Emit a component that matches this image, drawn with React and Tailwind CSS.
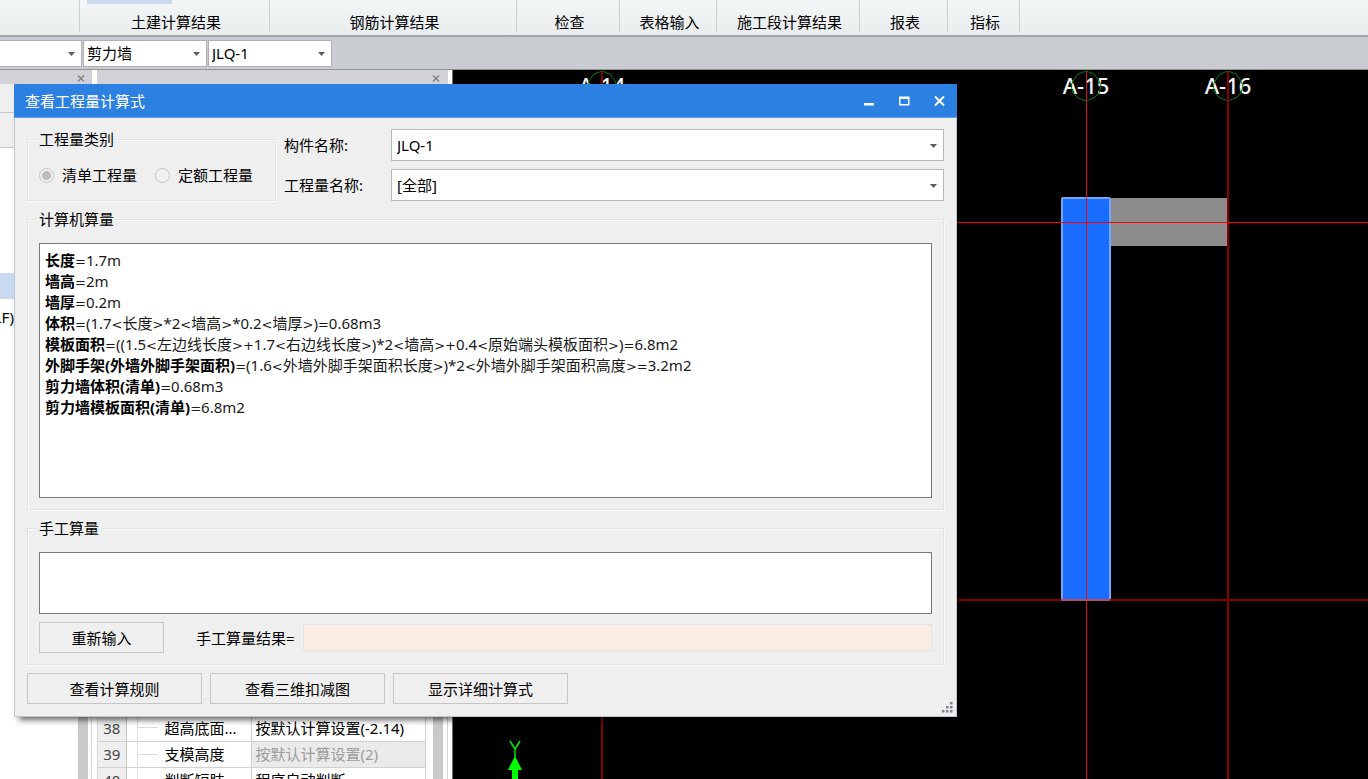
import React from "react";

const ribbonGroups = [
  { label: "", width: "w-[80px]" },
  { label: "土建计算结果", width: "w-[190px]", active: true },
  { label: "钢筋计算结果", width: "w-[247px]" },
  { label: "检查", width: "w-[103px]" },
  { label: "表格输入", width: "w-[97px]" },
  { label: "施工段计算结果", width: "w-[143px]" },
  { label: "报表", width: "w-[88px]" },
  { label: "指标", width: "w-[72px]" },
];

const formulas = [
  ["长度", "=1.7m"],
  ["墙高", "=2m"],
  ["墙厚", "=0.2m"],
  ["体积", "=(1.7<长度>*2<墙高>*0.2<墙厚>)=0.68m3"],
  ["模板面积", "=((1.5<左边线长度>+1.7<右边线长度>)*2<墙高>+0.4<原始端头模板面积>)=6.8m2"],
  ["外脚手架(外墙外脚手架面积)", "=(1.6<外墙外脚手架面积长度>)*2<外墙外脚手架面积高度>=3.2m2"],
  ["剪力墙体积(清单)", "=0.68m3"],
  ["剪力墙模板面积(清单)", "=6.8m2"],
];

const properties = [
  { id: 38, name: "超高底面...", value: "按默认计算设置(-2.14)" },
  { id: 39, name: "支模高度", value: "按默认计算设置(2)", muted: true },
  { id: 40, name: "判断短肢...", value: "程序自动判断" },
];

function Arrow() {
  return (
    <svg className="pointer-events-none absolute right-[7px] top-1/2 -mt-[1px]" width="7" height="4" viewBox="0 0 7 4" aria-hidden="true">
      <path d="M0 0h7L3.5 4z" fill="#5c5c5c" />
    </svg>
  );
}

function Combo({ id, label, value, className, selectClass }) {
  return (
    <div className={"relative " + className}>
      <select
        id={id}
        aria-label={label}
        defaultValue={value}
        className={"block h-full w-full appearance-none rounded-none bg-white pr-5 text-black outline-none " + selectClass}
      >
        <option value={value}>{value}</option>
      </select>
      <Arrow />
    </div>
  );
}

function CloseMark() {
  return (
    <svg width="8" height="7" viewBox="0 0 8 7" aria-hidden="true">
      <path d="M1 0.5l6 6M7 0.5l-6 6" stroke="#858585" strokeWidth="1.5" fill="none" />
    </svg>
  );
}

function Group({ title, className, children }) {
  return (
    <fieldset className={"min-w-0 border border-[#e2e2e2] shadow-[1px_1px_0_#fafafa,inset_1px_1px_0_#fafafa] " + className}>
      <legend className="-ml-[3px] h-5 bg-[#efefef] px-[3px] leading-5">{title}</legend>
      {children}
    </fieldset>
  );
}

function PushButton({ className, children }) {
  return (
    <button type="button" className={"h-[31px] border border-[#c6c6c6] bg-[#efefef] leading-5 " + className}>
      {children}
    </button>
  );
}

function Radio({ label, checked }) {
  return (
    <label className="flex items-center gap-2">
      <input
        type="radio"
        name="kind"
        disabled
        defaultChecked={checked}
        className="size-[15px] shrink-0 appearance-none rounded-full border border-[#c4c4c4] bg-[#f1f1f1] checked:bg-[radial-gradient(circle,#bcbcbc_4px,#f1f1f1_5px)]"
      />
      {label}
    </label>
  );
}

function Expression({ text }) {
  return text.split(/([<>=+])/).map((part, i) =>
    i % 2 ? (
      <span key={i} className="font-['DejaVu_Sans',sans-serif] text-[13px] leading-none">{part}</span>
    ) : (
      part
    )
  );
}

function AxisLabel({ x, text }) {
  return (
    <g>
      <text x={x} y="24" textAnchor="middle" fill="#f4f4f4" fontSize="22" fontWeight="500" fontFamily="'Noto Sans', sans-serif">
        {text}
      </text>
      <path
        transform={`translate(${x} 16)`}
        d="M0-15L8-12L13-5L15 0L13 7L8 12L0 15L-8 12L-13 7L-15 0L-13-5L-8-12Z"
        fill="none"
        stroke="#007c00"
      />
    </g>
  );
}

function Drawing() {
  return (
    <svg className="block h-full w-full bg-black" aria-label="平面图">
      <rect x="658" y="128" width="117" height="48" fill="#8c8c8c" />
      <rect x="609" y="128" width="48" height="402" rx="1" fill="#186dff" stroke="#76a5f5" strokeWidth="2" />
      <AxisLabel x={149} text="A-14" />
      <AxisLabel x={633} text="A-15" />
      <AxisLabel x={775} text="A-16" />
      <g shapeRendering="crispEdges">
        <path d="M149 1V2000M775 1V2000" stroke="#8a0000" strokeWidth="2" />
        <rect x="633" y="1" width="1" height="2000" fill="#d4141c" />
        <path d="M0 530H4000" stroke="#8a0000" strokeWidth="2" />
        <path d="M0 152.5H4000" stroke="#f00" strokeWidth="1" />
      </g>
      <path d="M608 530h49" stroke="#b74a6b" strokeWidth="2" />
      <path d="M57 671l5 8l5-8M62 679v8" stroke="#00e800" strokeWidth="1.5" fill="none" />
      <path d="M62 686l7 14h-4v40h-6v-40h-4z" fill="#0f0" />
    </svg>
  );
}

function Dialog() {
  return (
    <section
      role="dialog"
      aria-label="查看工程量计算式"
      className="absolute left-[14px] top-[84px] flex w-[943px] flex-col bg-[#efefef] shadow-[3px_5px_6px_-2px_rgba(0,0,0,0.6)]"
    >
      <header className="flex h-[34px] items-center justify-between border-b border-[#5b9cf0] bg-[#2c80e2] pl-[11px] pr-3 text-white">
        <h1>查看工程量计算式</h1>
        <div className="flex items-center gap-6">
          <button type="button" aria-label="最小化">
            <svg width="11" height="10" viewBox="0 0 11 10"><path d="M0 7h10v2.5H0z" fill="#fff" /></svg>
          </button>
          <button type="button" aria-label="最大化">
            <svg width="11" height="10" viewBox="0 0 11 10"><path d="M0 0.5h10.5v9H0zM1.5 3v5h7.5V3z" fill="#fff" fillRule="evenodd" /></svg>
          </button>
          <button type="button" aria-label="关闭">
            <svg width="11" height="10" viewBox="0 0 11 10"><path d="M1 0.5l9 9M10 0.5l-9 9" stroke="#fff" strokeWidth="2" fill="none" /></svg>
          </button>
        </div>
      </header>

      <div className="flex flex-col gap-2 border border-t-0 border-[#bcc6d6] px-3 pb-3 pt-[11px]">
        <div className="flex">
          <Group title="工程量类别" className="h-[72px] w-[249px] pl-[11px]">
            <div className="flex gap-[18px] pt-4">
              <Radio label="清单工程量" checked />
              <Radio label="定额工程量" />
            </div>
          </Group>
          <div className="ml-2 grid flex-1 grid-cols-[107px_1fr] items-center gap-y-2">
            <label htmlFor="member">构件名称:</label>
            <Combo id="member" value="JLQ-1" className="h-8" selectClass="border border-[#b9b9b9] pl-[5px]" />
            <label htmlFor="quantity">工程量名称:</label>
            <Combo id="quantity" value="[全部]" className="h-8" selectClass="border border-[#b9b9b9] pl-[5px]" />
          </div>
        </div>

        <Group title="计算机算量" className="px-[11px] pb-[11px]">
          <div className="mt-[14px] h-[255px] overflow-auto border border-[#7a7a7a] bg-white px-[5px] py-[6px] text-[#1a1a1a]">
            {formulas.map(([name, rest]) => (
              <p key={name} className="whitespace-nowrap leading-[21px]">
                <b className="font-bold text-black">{name}</b>
                <Expression text={rest} />
              </p>
            ))}
          </div>
        </Group>

        <Group title="手工算量" className="px-[11px] pb-[11px]">
          <textarea aria-label="手工算量" className="mt-[14px] block h-[62px] w-full resize-none border border-[#7a7a7a] bg-white px-[5px] outline-none" />
          <div className="mt-2 flex items-center">
            <PushButton className="w-[125px]">重新输入</PushButton>
            <label htmlFor="result" className="ml-8">手工算量结果=</label>
            <input id="result" readOnly className="ml-2 h-[27px] min-w-0 flex-1 border border-[#e3e3e3] bg-[#faeee4] outline-none" />
          </div>
        </Group>

        <div className="flex gap-2">
          <PushButton className="w-[175px]">查看计算规则</PushButton>
          <PushButton className="w-[175px]">查看三维扣减图</PushButton>
          <PushButton className="w-[175px]">显示详细计算式</PushButton>
        </div>
      </div>

      <svg className="absolute bottom-1 right-1 cursor-se-resize" width="11" height="11" viewBox="0 0 11 11" aria-hidden="true">
        <path d="M8 0h2.5v2.5h-2.5zM4 4h2.5v2.5h-2.5zM8 4h2.5v2.5h-2.5zM0 8h2.5v2.5h-2.5zM4 8h2.5v2.5h-2.5zM8 8h2.5v2.5h-2.5z" fill="#80808c" />
      </svg>
    </section>
  );
}

export default function App() {
  return (
    <div className="relative flex h-screen flex-col overflow-hidden bg-white font-['Noto_Sans','Noto_Sans_CJK_SC',sans-serif] text-[15px] leading-5 text-black">
      <nav className="flex h-[35px] shrink-0 bg-linear-to-b from-[#f4f7f8] to-[#e9edee]">
        {ribbonGroups.map((g, i) => (
          <div key={i} className={"flex h-8 shrink-0 flex-col items-center border-r border-[#ccced0] " + g.width}>
            <div className={"h-1 w-[85px] " + (g.active ? "ml-[7px] self-start bg-[#c9daf0]" : "")} />
            <span className="mt-2 pl-[3px]">{g.label}</span>
          </div>
        ))}
      </nav>

      <div className="flex h-[35px] shrink-0 items-center gap-px border-b border-t-2 border-b-[#8f9397] border-t-[#a2a7b1] bg-[#c9ccd1]">
        <Combo label="楼层" value=" " className="h-[27px] w-[82px]" selectClass="border border-l-0 border-[#adb0b4]" />
        <Combo label="构件类型" value="剪力墙" className="h-[27px] w-[124px]" selectClass="border border-[#adb0b4] pl-[3px]" />
        <Combo label="构件" value="JLQ-1" className="h-[27px] w-[124px]" selectClass="border border-[#adb0b4] pl-[3px]" />
      </div>

      <main className="flex min-h-0 flex-1">
        <aside className="flex w-[92px] shrink-0 flex-col">
          <div className="flex h-[14px] shrink-0 items-center justify-end bg-[#d1d3d8] pr-[7px] pt-[3px]"><CloseMark /></div>
          <div className="h-[29px] shrink-0 border-b border-[#c5c8cf] bg-[#efefef]" />
          <div className="h-[35px] shrink-0 border-b border-[#c5c8cf] bg-[#efefef]" />
          <div className="flex flex-1">
            <div className="flex-1 pt-[125px]">
              <div className="h-[26px] bg-[#c9daf0]" />
              <div className="mt-2 flex w-[14px] justify-end overflow-hidden">LF)</div>
            </div>
            <div className="w-[10px] bg-[#c9c9c9]" />
            <div className="w-1 border-r border-[#d4d4d4]" />
          </div>
        </aside>

        <aside className="ml-[5px] flex w-[351px] shrink-0 flex-col">
          <div className="flex h-[14px] shrink-0 items-center justify-end bg-[#d1d3d8] pr-[8px] pt-[3px]"><CloseMark /></div>
          <div className="flex min-h-0 flex-1 border-x border-[#d4d4d4]">
            <div className="flex-1 overflow-hidden pt-[631px]">
              <table className="w-full table-fixed border-collapse">
                <colgroup>
                  <col className="w-[28px]" />
                  <col className="w-[11px]" />
                  <col className="w-[114px]" />
                  <col />
                </colgroup>
                <tbody>
                  {properties.map((p) => (
                    <tr key={p.id} className="h-[26px] border-b border-[#d0d0d0]">
                      <th scope="row" className="border-r border-[#c4c4c4] bg-[#efefef] text-center font-normal text-[#444]">{p.id}</th>
                      <td className="border-r border-[#e0e0e0]" />
                      <td className="overflow-hidden whitespace-nowrap border-r border-[#d0d0d0]">
                        <span className="flex items-center gap-[7px]">
                          <i className="h-px w-5 bg-[#dcdcdc]" />
                          {p.name}
                        </span>
                      </td>
                      <td className={"whitespace-nowrap border-r border-[#d0d0d0] pl-1 " + (p.muted ? "bg-[#eaeaea] text-[#9c9c9c]" : "")}>{p.value}</td>
                    </tr>
                  ))}
                </tbody>
              </table>
            </div>
            <div className="ml-[7px] mr-1 w-[10px] bg-[#c9c9c9]" />
          </div>
        </aside>

        <div className="ml-1 min-w-0 flex-1 border-l border-[#707070]">
          <Drawing />
        </div>
      </main>

      <Dialog />
    </div>
  );
}
